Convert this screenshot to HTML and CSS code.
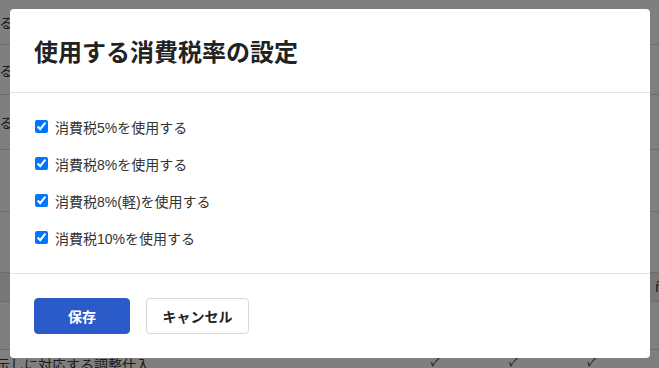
FILE: index.html
```html
<!DOCTYPE html>
<html lang="ja">
<head>
<meta charset="utf-8">
<link rel="stylesheet" href="styles.css">
</head>
<body>
<div class="page">
  <div class="row r1"><span class="cell-text">-- 使用する</span></div>
  <div class="row r2"><span class="cell-text">-- 使用する</span></div>
  <div class="row r3"><span class="cell-text">-- 使用する</span></div>
  <div class="row r4"></div>
  <div class="row r5"></div>
  <div class="row r6 shade"><span class="cell-right">ñ</span></div>
  <div class="row r7"><span class="cell-text">取引</span></div>
  <div class="row r8"><span class="cell-left">示しに対応する調整仕入</span><span class="marks"><span>✓</span><span>✓</span><span>✓</span></span></div>
</div>

<div class="overlay">
  <div class="modal">
    <div class="modal-header">
      <h1 class="modal-title">使用する消費税率の設定</h1>
    </div>
    <div class="modal-body">
      <label class="check-row"><input type="checkbox" checked><span>消費税5%を使用する</span></label>
      <label class="check-row"><input type="checkbox" checked><span>消費税8%を使用する</span></label>
      <label class="check-row"><input type="checkbox" checked><span>消費税8%(軽)を使用する</span></label>
      <label class="check-row"><input type="checkbox" checked><span>消費税10%を使用する</span></label>
    </div>
    <div class="modal-footer">
      <button class="btn btn-primary">保存</button>
      <button class="btn btn-secondary">キャンセル</button>
    </div>
  </div>
</div>
</body>
</html>
```

FILE: styles.css
```css
html, body {
  margin: 0;
  padding: 0;
  background: #ffffff;
  font-family: "Liberation Sans", "Noto Sans CJK JP", sans-serif;
  color: #333333;
}

.page {
  width: 659px;
  height: 368px;
  overflow: hidden;
}

.row {
  border-bottom: 1px solid #d8d8d8;
  display: flex;
  align-items: center;
  position: relative;
  font-size: 14px;
  box-sizing: border-box;
}

.r1 { height: 45px; }
.r2 { height: 50px; }
.r3 { height: 55px; }
.r4 { height: 62px; }
.r5 { height: 61px; }
.r6 { height: 29px; }
.r7 { height: 48px; }
.r8 { height: 30px; align-items: flex-start; border-bottom: none; }

.shade { background: #efefef; }

.cell-text {
  margin-left: -56px;
  white-space: nowrap;
}

.cell-left {
  margin-left: -4px;
  padding-top: 4px;
  white-space: nowrap;
}

.cell-right {
  margin-left: auto;
  margin-right: -4px;
}

.marks {
  display: flex;
  gap: 70px;
  margin-left: 280px;
  padding-top: 2px;
  font-size: 12px;
  font-style: italic;
}

.overlay {
  position: fixed;
  inset: 0;
  background: rgba(0, 0, 0, 0.5);
  padding: 9px 0 0 10px;
}

.modal {
  width: 640px;
  height: 349px;
  background: #ffffff;
  border-radius: 4px;
  display: flex;
  flex-direction: column;
  box-sizing: border-box;
}

.modal-header {
  padding: 24px 24px 23px;
  border-bottom: 1px solid #e3e3e3;
}

.modal-title {
  margin: 0;
  font-family: "Noto Sans CJK JP", sans-serif;
  font-size: 24px;
  line-height: 36px;
  font-weight: 700;
  color: #222222;
}

.modal-body {
  padding: 15px 24px 17px;
  border-bottom: 1px solid #e3e3e3;
  display: flex;
  flex-direction: column;
}

.check-row {
  height: 37px;
  display: flex;
  align-items: center;
  font-size: 14px;
  color: #333333;
}

.check-row input {
  margin: 0 7px 0 1px;
  width: 13px;
  height: 13px;
}

.modal-footer {
  padding: 24px 24px;
  display: flex;
  gap: 16px;
}

.btn {
  height: 36px;
  border-radius: 4px;
  font-family: "Noto Sans CJK JP", sans-serif;
  font-size: 14px;
  font-weight: 700;
  cursor: pointer;
}

.btn-primary {
  width: 96px;
  background: #2a5bc8;
  border: 1px solid #2a5bc8;
  color: #ffffff;
}

.btn-secondary {
  width: 103px;
  background: #ffffff;
  border: 1px solid #d6d6d6;
  color: #222222;
}
```
